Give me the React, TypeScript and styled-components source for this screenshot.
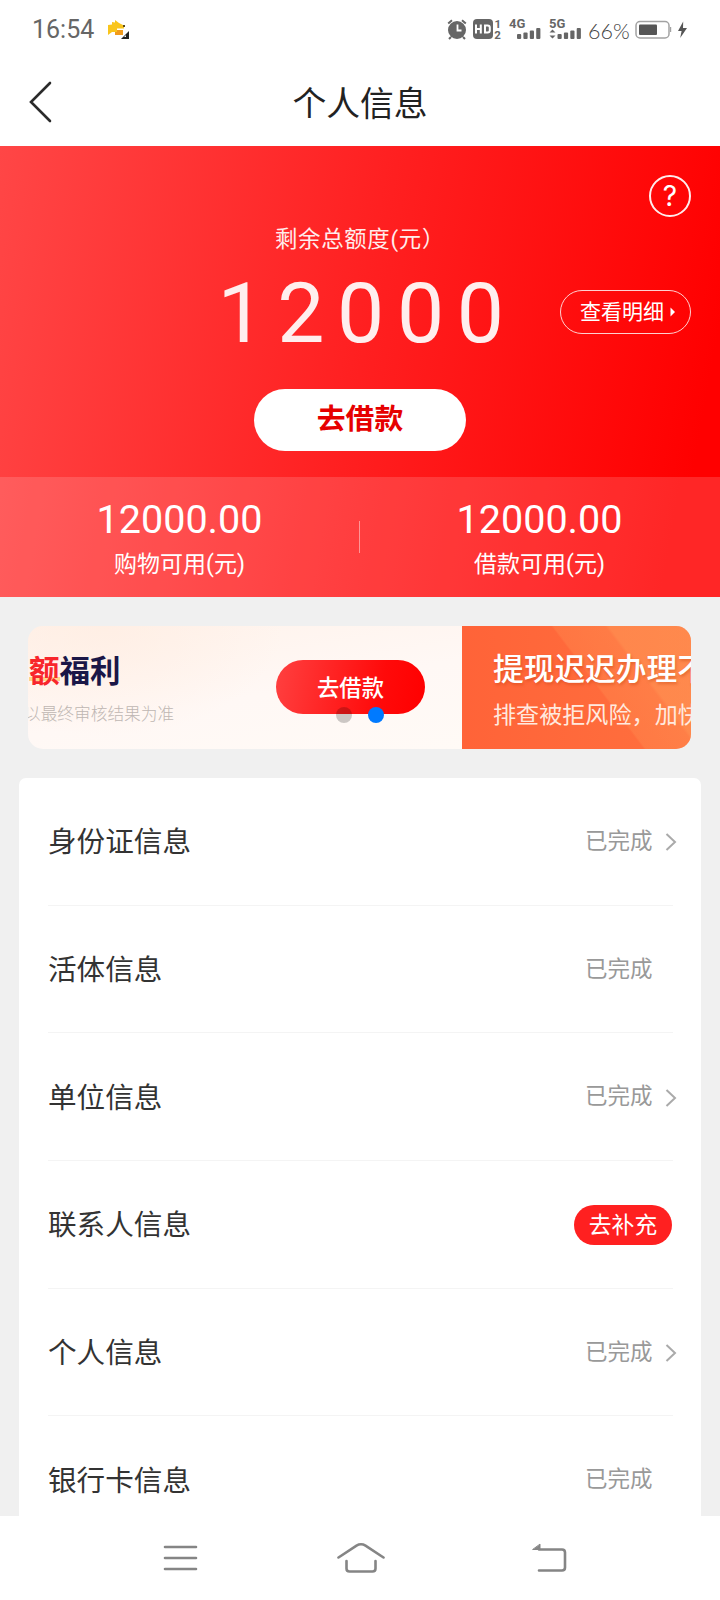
import React from "react";
import styled, { createGlobalStyle, css } from "styled-components";

const GlobalStyle = createGlobalStyle`
  *, *::before, *::after { box-sizing: border-box; }
  body {
    margin: 0;
    background: #f0f0f0;
    font-family: Roboto, "Noto Sans CJK SC", sans-serif;
    color: #333;
  }
  button { font: inherit; border: 0; padding: 0; margin: 0; background: none; color: inherit; }
`;

const Screen = styled.div`
  width: 720px;
  height: 1600px;
  display: flex;
  flex-direction: column;
  overflow: hidden;
  background: #f0f0f0;
`;

/* ---------- status bar ---------- */

const StatusBar = styled.div`
  height: 60px;
  flex: none;
  display: flex;
  align-items: center;
  justify-content: space-between;
  padding: 0 33px 0 32px;
  background: #fff;
  color: #666;
`;

const StatusSide = styled.div`
  display: flex;
  align-items: center;
`;

const Clock = styled.span`
  font-size: 25px;
  line-height: 30px;
  width: 76px;
  white-space: nowrap;
`;

const Battery = styled.span`
  font-family: Lato, sans-serif;
  font-weight: 300;
  font-size: 21.5px;
  line-height: 24px;
  width: 47px;
  padding-top: 1px;
  color: #444;
  white-space: nowrap;
`;

/* ---------- title bar ---------- */

const TitleBar = styled.header`
  height: 86px;
  flex: none;
  display: grid;
  grid-template-columns: 60px 1fr 60px;
  align-items: center;
  padding-bottom: 2px;
  background: #fff;
`;

const BackButton = styled.button`
  display: flex;
  padding-left: 28px;
`;

const Title = styled.h1`
  margin: 0;
  padding-top: 5px;
  text-align: center;
  font-size: 33.8px;
  line-height: 44px;
  font-weight: 400;
  color: #222;
`;

/* ---------- quota panel ---------- */

const QuotaPanel = styled.section`
  height: 451px;
  flex: none;
  display: flex;
  flex-direction: column;
  background: linear-gradient(100deg, #ff4646 0%, #ff1f20 50%, #ff0000 94%);
  color: #fff;
`;

const QuotaTop = styled.div`
  height: 331px;
  padding: 29px 29px 26px;
  display: flex;
  flex-direction: column;
  align-items: center;
`;

const HelpButton = styled.button`
  align-self: flex-end;
  width: 42px;
  height: 42px;
  border: 2px solid #ffecec;
  border-radius: 50%;
  font-family: Inter, sans-serif;
  font-size: 28px;
  line-height: 38px;
  text-align: center;
`;

const QuotaLabel = styled.div`
  height: 42px;
  line-height: 44px;
  font-size: 22.4px;
  letter-spacing: 0.7px;
  color: #ffecec;
  white-space: nowrap;
`;

const AmountRow = styled.div`
  width: 100%;
  height: 106px;
  display: grid;
  grid-template-columns: 1fr auto 1fr;
  align-items: center;
`;

const Amount = styled.div`
  grid-column: 2;
  padding-top: 4px;
  font-size: 84px;
  line-height: 100px;
  letter-spacing: 12.6px;
  margin-right: -14px;
  color: #ffeeee;
`;

const DetailButton = styled.button`
  grid-column: 3;
  justify-self: end;
  width: 131px;
  height: 44px;
  display: flex;
  align-items: center;
  justify-content: center;
  gap: 6px;
  padding-left: 5px;
  border: 1px solid #ffd0d0;
  border-radius: 22px;
  font-size: 21px;
  line-height: 30px;
`;

const BorrowButton = styled.button`
  width: 212px;
  height: 62px;
  margin-top: 24px;
  padding-bottom: 2px;
  border-radius: 31px;
  background: #fff;
  color: #e60000;
  font-weight: 700;
  font-size: 28.8px;
  line-height: 56px;
`;

const Split = styled.div`
  height: 120px;
  display: flex;
  align-items: center;
  padding-right: 1px;
  background: rgba(255, 255, 255, 0.15);
`;

const SplitItem = styled.div`
  flex: 1;
  display: flex;
  flex-direction: column;
  align-items: center;
`;

const SplitAmount = styled.div`
  padding-top: 3px;
  font-size: 39.5px;
  line-height: 48px;
`;

const SplitLabel = styled.div`
  font-size: 23px;
  line-height: 32px;
  margin-top: 5px;
`;

const SplitRule = styled.div`
  width: 1px;
  height: 32px;
  background: rgba(255, 255, 255, 0.45);
`;

/* ---------- banner carousel ---------- */

const Carousel = styled.section`
  position: relative;
  flex: none;
  width: 663px;
  height: 123px;
  margin: 29px 0 0 28px;
  display: flex;
  border-radius: 15px;
  overflow: hidden;
`;

const BenefitSlide = styled.div`
  flex: none;
  width: 434px;
  display: flex;
  justify-content: space-between;
  padding-right: 37px;
  background:
    radial-gradient(ellipse 180px 110px at 75px 0, rgba(255, 236, 224, 0.6), transparent),
    linear-gradient(170deg, #fff2ea 0%, #fff8f5 55%, #fffaf6 100%);
`;

const BenefitText = styled.div`
  padding-top: 25px;
  white-space: nowrap;
`;

const BenefitTitle = styled.div`
  font-size: 30.5px;
  line-height: 42px;
  font-weight: 700;
  color: #1b1747;
  padding-left: 1px;
`;

const Highlight = styled.span`
  color: #f8262c;
  background: linear-gradient(#ffd58a, #ffd58a) left 0 bottom 8px / 100% 4px no-repeat;
`;

const BenefitNote = styled.div`
  margin: 10px 0 0 -4px;
  font-size: 16.7px;
  line-height: 24px;
  font-weight: 300;
  color: #beb6b2;
`;

const BenefitButton = styled.button`
  width: 149px;
  height: 54px;
  margin-top: 34px;
  border-radius: 27px;
  background: linear-gradient(100deg, #ff4040, #ff0a0a 70%, #ff0000);
  color: #fff;
  font-size: 22.3px;
  line-height: 56px;
  font-weight: 500;
`;

const RiskSlide = styled.div`
  flex: none;
  width: 434px;
  padding: 23px 0 0 31px;
  white-space: nowrap;
  color: #fff;
  background:
    linear-gradient(53deg, transparent 145px, rgba(255, 165, 95, 0.22) 147px, rgba(255, 165, 95, 0.28) 188px, rgba(255, 175, 100, 0.4) 191px),
    linear-gradient(90deg, #ff6338, #ff703e 229px);
`;

const RiskTitle = styled.div`
  font-size: 30.7px;
  line-height: 42px;
  font-weight: 500;
  text-shadow: 1px 2px 3px rgba(190, 60, 10, 0.4);
`;

const RiskNote = styled.div`
  margin-top: 9px;
  font-size: 23.1px;
  line-height: 32px;
  color: #ffe9df;
`;

const Dots = styled.div`
  position: absolute;
  left: 308px;
  top: 81px;
  display: flex;
  gap: 16px;
`;

const Dot = styled.i<{ $active?: boolean }>`
  width: 16px;
  height: 16px;
  border-radius: 50%;
  background: ${(p) => (p.$active ? "#007aff" : "rgba(0, 0, 0, 0.2)")};
`;

/* ---------- information list ---------- */

const List = styled.ul`
  flex: 1;
  min-height: 0;
  overflow: hidden;
  width: 682px;
  margin: 29px 0 0 19px;
  padding: 0 28px 0 29px;
  list-style: none;
  background: #fff;
  border-radius: 7px 7px 0 0;
`;

const Row = styled.li`
  height: 127.7px;
  padding-bottom: 2px;
  display: flex;
  align-items: center;
  justify-content: space-between;
  border-bottom: 1px solid #f4f4f4;
`;

const RowLabel = styled.span`
  padding-top: 4px;
  font-size: 28.6px;
  line-height: 40px;
  color: #333;
`;

const RowState = styled.span`
  display: flex;
  align-items: center;
  width: 90px;
  margin-right: -2px;
  padding-top: 1px;
  font-size: 22.5px;
  line-height: 32px;
  color: #999;
  white-space: nowrap;
`;

const Arrow = styled.svg`
  flex: none;
  margin: 3px 0 0 12px;
`;

const FillButton = styled.button`
  width: 98px;
  height: 40px;
  margin: 4px 1px 0 0;
  border-radius: 20px;
  background: #ff2020;
  color: #fff;
  font-size: 22.8px;
  line-height: 39px;
`;

/* ---------- system navigation ---------- */

const NavBar = styled.nav`
  flex: none;
  height: 84px;
  display: flex;
  align-items: center;
  justify-content: space-between;
  padding: 0 152px 0 162px;
  background: #fff;
`;

const strokeIcon = css`
  fill: none;
  stroke: #858585;
  stroke-width: 2.6;
  stroke-linecap: round;
  stroke-linejoin: round;
`;

const NavIcon = styled.svg`
  ${strokeIcon}
`;

function NoticeIcon() {
  return (
    <svg width="21" height="20" viewBox="0 0 21 20">
      <path d="M0 5l4-.5L4 2l3 .6L7 0l4 3 5 2.6v3H5l-1 3.4-4 3z" fill="#f9c51c" />
      <path d="M7 10h8v5H7z" fill="#f19a1b" />
      <path d="M3 6h6v6H3z" fill="#f9c51c" />
      <path d="M15 5h2v2h-2z" fill="#5b4a20" />
      <path d="M21 11v8h-8z" fill="#222" />
      <path d="M18 15v2h-2z" fill="#eee" />
    </svg>
  );
}

function SystemIcons() {
  const bars = (x: number) =>
    [5, 6.5, 8.5, 11].map((h, i) => (
      <rect key={i} x={x + i * 6.4} y={21 - h} width="4.2" height={h} rx="1" />
    ));
  return (
    <svg width="141" height="36" viewBox="0 -6 141 36" fill="#666">
      <circle cx="10" cy="12" r="9" />
      <path d="M1.2 5.5L5 2.2M18.8 5.5L15 2.2M4 19l-2 2M16 19l2 2" stroke="#666" strokeWidth="2" />
      <path d="M10.5 6.5v6h4" stroke="#fff" strokeWidth="1.8" fill="none" />
      <rect x="26" y="1" width="20" height="20" rx="4" />
      <g stroke="#fff" strokeWidth="2" fill="none">
        <path d="M29 6.5v9M33.8 6.5v9M29 11h5M38 7.5h2.6q2.2 0 2.2 2v3q0 2-2.2 2H38z" />
      </g>
      <g fontFamily="Roboto" fontWeight="700">
        <text x="47.5" y="9.5" fontSize="11.5">1</text>
        <text x="47.2" y="21" fontSize="11.5">2</text>
        <text x="62" y="10.2" fontSize="13">4G</text>
        <text x="102" y="10.2" fontSize="13">5G</text>
      </g>
      {bars(70)}
      {bars(110.5)}
      <path d="M102.5 14.5l3-3 3 3zM102.5 17.5l3 3 3-3z" />
    </svg>
  );
}

function BatteryIcon() {
  return (
    <svg width="52" height="20" viewBox="0 0 52 20">
      <rect x="1" y="1.5" width="33" height="16.5" rx="4" fill="none" stroke="#a2a2a2" strokeWidth="1.5" />
      <rect x="4" y="4.5" width="18" height="10.5" rx="1" fill="#555" />
      <rect x="35" y="7" width="1.2" height="5" fill="#a2a2a2" />
      <path d="M48.2 1.5L43 11h3.6l-1.4 7L52 8h-4z" fill="#555" />
    </svg>
  );
}

type Item = { label: string; state: "done" | "open"; arrow?: boolean };

const items: Item[] = [
  { label: "身份证信息", state: "done", arrow: true },
  { label: "活体信息", state: "done" },
  { label: "单位信息", state: "done", arrow: true },
  { label: "联系人信息", state: "open" },
  { label: "个人信息", state: "done", arrow: true },
  { label: "银行卡信息", state: "done" },
];

export default function App() {
  return (
    <>
      <GlobalStyle />
      <Screen lang="zh-CN">
        <StatusBar>
          <StatusSide>
            <Clock>16:54</Clock>
            <NoticeIcon />
          </StatusSide>
          <StatusSide>
            <SystemIcons />
            <Battery>66%</Battery>
            <BatteryIcon />
          </StatusSide>
        </StatusBar>

        <TitleBar>
          <BackButton aria-label="返回">
            <svg width="26" height="42" viewBox="0 0 26 42" fill="none" stroke="#2b2b2b" strokeWidth="2.6" strokeLinecap="round">
              <path d="M22 2L3 21l19 19" />
            </svg>
          </BackButton>
          <Title>个人信息</Title>
        </TitleBar>

        <QuotaPanel>
          <QuotaTop>
            <HelpButton>?</HelpButton>
            <QuotaLabel>剩余总额度(元）</QuotaLabel>
            <AmountRow>
              <Amount>12000</Amount>
              <DetailButton>
                查看明细
                <svg width="6" height="10" viewBox="0 0 6 10" fill="#fff">
                  <path d="M0.5 0.5l4.5 4.5L0.5 9.5z" />
                </svg>
              </DetailButton>
            </AmountRow>
            <BorrowButton>去借款</BorrowButton>
          </QuotaTop>
          <Split>
            <SplitItem>
              <SplitAmount>12000.00</SplitAmount>
              <SplitLabel>购物可用(元)</SplitLabel>
            </SplitItem>
            <SplitRule />
            <SplitItem>
              <SplitAmount>12000.00</SplitAmount>
              <SplitLabel>借款可用(元)</SplitLabel>
            </SplitItem>
          </Split>
        </QuotaPanel>

        <Carousel>
          <BenefitSlide>
            <BenefitText>
              <BenefitTitle>
                <Highlight>额</Highlight>福利
              </BenefitTitle>
              <BenefitNote>以最终审核结果为准</BenefitNote>
            </BenefitText>
            <BenefitButton>去借款</BenefitButton>
          </BenefitSlide>
          <RiskSlide>
            <RiskTitle>提现迟迟办理不</RiskTitle>
            <RiskNote>排查被拒风险，加快</RiskNote>
          </RiskSlide>
          <Dots>
            <Dot />
            <Dot $active />
          </Dots>
        </Carousel>

        <List>
          {items.map((item) => (
            <Row key={item.label}>
              <RowLabel>{item.label}</RowLabel>
              {item.state === "open" ? (
                <FillButton>去补充</FillButton>
              ) : (
                <RowState>
                  已完成
                  {item.arrow && (
                    <Arrow width="12" height="18" viewBox="0 0 12 18" fill="none" stroke="#aaa" strokeWidth="2">
                      <path d="M1.5 1l8.5 8-8.5 8" />
                    </Arrow>
                  )}
                </RowState>
              )}
            </Row>
          ))}
        </List>

        <NavBar>
          <NavIcon width="37" height="30" viewBox="0 0 37 30">
            <path d="M3 4h31M3 15h31M3 26h31" />
          </NavIcon>
          <NavIcon width="50" height="32" viewBox="0 0 50 32">
            <path d="M2.5 15.5L20.5 3.6q4.5-2.6 9 0L47.5 15.5" />
            <path d="M10.5 19v7.5q0 3 3 3h23q3 0 3-3V19" />
          </NavIcon>
          <NavIcon width="46" height="32" viewBox="-9 0 46 32">
            <path d="M8 7.5h23q3 0 3 3v15q0 3-3 3H8" />
            <path d="M2 7.5h7V2.5z" fill="#858585" strokeWidth="1" />
          </NavIcon>
        </NavBar>
      </Screen>
    </>
  );
}
